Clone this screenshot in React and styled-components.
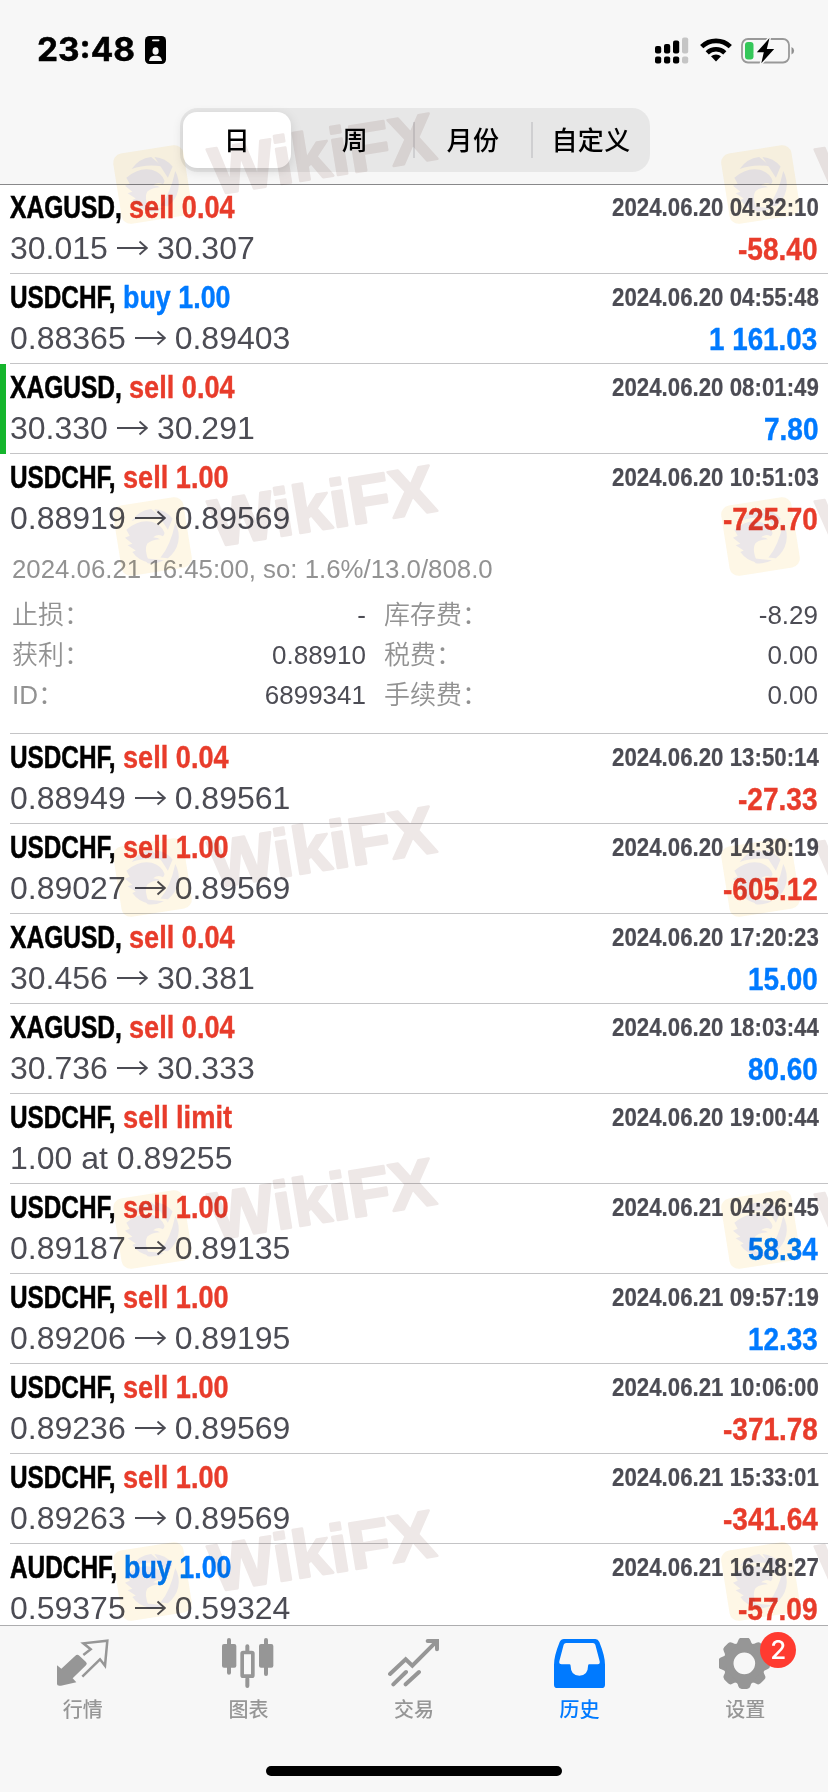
import { useLayoutEffect, useRef, useState } from 'react';
import styled, { createGlobalStyle } from 'styled-components';

const GlobalStyle = createGlobalStyle`
    * {
        box-sizing: border-box;
    }

    body {
        margin: 0;
        background: #ffffff;
        font-family: "Liberation Sans", "Noto Sans CJK SC", sans-serif;
    }
`;

const colors = {
    red: '#e83c2b',
    blue: '#007aff',
    text: '#4c4c54',
    muted: '#929292',
    bar: '#f7f7f7',
};

const Screen = styled.div`
    position: relative;
    display: flex;
    flex-direction: column;
    width: 828px;
    height: 1792px;
    overflow: hidden;
    background: #ffffff;
`;

const Header = styled.header`
    flex: none;
    display: flex;
    flex-direction: column;
    align-items: center;
    height: 185px;
    background: ${colors.bar};
    border-bottom: 1px solid #88888a;
`;

const StatusBar = styled.div`
    display: flex;
    justify-content: space-between;
    align-items: center;
    width: 100%;
    height: 108px;
    padding: 0 33px 8px 37px;
`;

const StatusGroup = styled.div`
    display: flex;
    align-items: center;
    gap: ${({ $gap }) => $gap}px;
`;

const Clock = styled.span`
    font: 700 32px/40px Inter, "Liberation Sans", sans-serif;
    color: #000000;
`;

const Segments = styled.div`
    display: grid;
    grid-template-columns: 113px 118px 118px 118px;
    width: 470px;
    height: 64px;
    margin-left: 2px;
    padding: 4px 0 4px 3px;
    border-radius: 18px;
    background: #e7e7e7;
`;

const Segment = styled.button`
    display: flex;
    align-items: center;
    justify-content: center;
    border: 0;
    margin-right: ${({ $active }) => ($active ? 5 : 0)}px;
    padding: 0 0 3px;
    position: relative;
    border-radius: 14px;
    background: ${({ $active }) => ($active ? '#ffffff' : 'transparent')};
    box-shadow: ${({ $active }) => ($active ? '0 3px 12px rgba(0, 0, 0, 0.12)' : 'none')};
    font: 500 26px/34px "Noto Sans CJK SC", sans-serif;
    letter-spacing: 0.4px;
    color: #000000;

    &::before {
        content: "";
        display: ${({ $divider }) => ($divider ? 'block' : 'none')};
        position: absolute;
        left: -1px;
        top: 10px;
        width: 2px;
        height: 36px;
        background: #cfcfd1;
    }
`;

const List = styled.main`
    flex: none;
    height: 1441px;
    margin-top: -1px;
    overflow: hidden;
`;

const Item = styled.article`
    padding-left: 10px;
    box-shadow: ${({ $marked }) => ($marked ? 'inset 6px 0 0 #15b52c' : 'none')};
`;

const ItemBody = styled.div`
    border-bottom: 1px solid #c4c4c6;
`;

const ItemMain = styled.div`
    display: flex;
    justify-content: space-between;
    height: ${({ $open }) => ($open ? 90 : 89)}px;
    padding: 3px 10px 0 0;
    line-height: 40px;
    white-space: nowrap;
`;

const Column = styled.div`
    display: flex;
    flex-direction: column;
    align-items: ${({ $end }) => ($end ? 'flex-end' : 'flex-start')};
`;

const Title = styled.div`
    display: flex;
    height: 40px;
    font-size: 32px;
    font-weight: 700;
    color: #000000;
`;

const Action = styled.span`
    color: ${({ $buy }) => ($buy ? colors.blue : colors.red)};
`;

const Price = styled.div`
    display: flex;
    align-items: center;
    gap: 9px;
    height: 40px;
    padding-top: 1px;
    font-size: 32px;
    color: ${colors.text};
`;

const DateTime = styled.div`
    height: 40px;
    font-size: 26px;
    font-weight: 700;
    color: ${colors.text};
`;

const Profit = styled.div`
    height: 42px;
    padding-top: 2px;
    font-size: 32px;
    font-weight: 700;
    color: ${({ $minus }) => ($minus ? colors.red : colors.blue)};
`;

const Details = styled.div`
    height: 189px;
    padding: 9px 10px 0 2px;
    color: ${colors.muted};
`;

const Comment = styled.div`
    height: 42px;
    font-size: 25px;
    line-height: 32px;
`;

const DetailsGrid = styled.dl`
    display: grid;
    grid-template-columns: 354px 1fr;
    column-gap: 18px;
    grid-auto-rows: 40px;
    margin: 0;
`;

const Field = styled.div`
    display: flex;
    justify-content: space-between;
    font-size: 26px;
    line-height: 40px;

    dt {
        font-weight: 350;
    }

    dd {
        margin: 0;
        color: ${colors.text};
    }
`;

const TabBar = styled.nav`
    flex: 1;
    display: grid;
    grid-template-columns: repeat(5, 1fr);
    align-content: start;
    background: ${colors.bar};
    border-top: 1px solid #adadaf;
`;

const Tab = styled.a`
    display: flex;
    flex-direction: column;
    align-items: center;
    padding-top: 12px;
    color: ${({ $active }) => ($active ? colors.blue : '#969696')};
    font: 500 20px/28px "Noto Sans CJK SC", sans-serif;
`;

const TabIcon = styled.span`
    position: relative;
    height: 57px;

    svg {
        display: block;
        width: 52px;
        height: 52px;
    }
`;

const Badge = styled.span`
    position: absolute;
    top: -6px;
    left: 41px;
    width: 36px;
    height: 36px;
    border-radius: 50%;
    background: #ff3b30;
    color: #ffffff;
    text-align: center;
    font: 500 26px/36px Inter, sans-serif;
`;

const HomeIndicator = styled.div`
    grid-column: 1 / -1;
    justify-self: center;
    width: 296px;
    height: 10px;
    margin-top: 43px;
    border-radius: 5px;
    background: #000000;
`;

const Watermarks = styled.div`
    position: absolute;
    inset: 0;
    overflow: hidden;
    pointer-events: none;
    mix-blend-mode: multiply;

    svg {
        position: absolute;
        overflow: visible;
        opacity: 0.135;
    }
`;

const FitBox = styled.span`
    display: inline-block;
    white-space: pre;
`;

const FitInner = styled.span`
    display: inline-block;
    transform-origin: 0 50%;
    -webkit-text-stroke: ${({ $stroke }) => $stroke || 0}px currentColor;
`;

// Squeezes the text horizontally so that it takes exactly `width` pixels
const Fit = ({ width, stroke, children }) => {
    const ref = useRef(null);
    const [scale, setScale] = useState(1);

    useLayoutEffect(() => {
        setScale(width / ref.current.offsetWidth);
    }, [width]);

    return (
        <FitBox style={{ width }}>
            <FitInner ref={ref} $stroke={stroke} style={{ transform: `scaleX(${scale})` }}>{children}</FitInner>
        </FitBox>
    )
}

const symbolWidth = { XAGUSD: 119, USDCHF: 112.5, AUDCHF: 113.5 };
const actionWidth = { 'sell 0.04': 106, 'sell 1.00': 106, 'buy 1.00': 107.5, 'sell limit': 109 };

// condensed bold digits: narrow punctuation, wide numerals
const amountWidth = (value) => [...value].reduce((sum, c) => {
    if (c === '.' || c === ' ') return sum + 7.8;
    if (c === '-') return sum + 10;
    return sum + 15.5;
}, 0);

const orders = [
    { symbol: 'XAGUSD', action: 'sell 0.04', open: '30.015', close: '30.307', date: '2024.06.20 04:32:10', profit: '-58.40' },
    { symbol: 'USDCHF', action: 'buy 1.00', open: '0.88365', close: '0.89403', date: '2024.06.20 04:55:48', profit: '1 161.03' },
    { symbol: 'XAGUSD', action: 'sell 0.04', open: '30.330', close: '30.291', date: '2024.06.20 08:01:49', profit: '7.80', marked: true },
    {
        symbol: 'USDCHF', action: 'sell 1.00', open: '0.88919', close: '0.89569', date: '2024.06.20 10:51:03', profit: '-725.70',
        comment: '2024.06.21 16:45:00, so: 1.6%/13.0/808.0',
        fields: [
            ['止损：', '-'], ['库存费：', '-8.29'],
            ['获利：', '0.88910'], ['税费：', '0.00'],
            ['ID：', '6899341'], ['手续费：', '0.00'],
        ],
    },
    { symbol: 'USDCHF', action: 'sell 0.04', open: '0.88949', close: '0.89561', date: '2024.06.20 13:50:14', profit: '-27.33' },
    { symbol: 'USDCHF', action: 'sell 1.00', open: '0.89027', close: '0.89569', date: '2024.06.20 14:30:19', profit: '-605.12' },
    { symbol: 'XAGUSD', action: 'sell 0.04', open: '30.456', close: '30.381', date: '2024.06.20 17:20:23', profit: '15.00' },
    { symbol: 'XAGUSD', action: 'sell 0.04', open: '30.736', close: '30.333', date: '2024.06.20 18:03:44', profit: '80.60' },
    { symbol: 'USDCHF', action: 'sell limit', open: '1.00 at 0.89255', date: '2024.06.20 19:00:44' },
    { symbol: 'USDCHF', action: 'sell 1.00', open: '0.89187', close: '0.89135', date: '2024.06.21 04:26:45', profit: '58.34' },
    { symbol: 'USDCHF', action: 'sell 1.00', open: '0.89206', close: '0.89195', date: '2024.06.21 09:57:19', profit: '12.33' },
    { symbol: 'USDCHF', action: 'sell 1.00', open: '0.89236', close: '0.89569', date: '2024.06.21 10:06:00', profit: '-371.78' },
    { symbol: 'USDCHF', action: 'sell 1.00', open: '0.89263', close: '0.89569', date: '2024.06.21 15:33:01', profit: '-341.64' },
    { symbol: 'AUDCHF', action: 'buy 1.00', open: '0.59375', close: '0.59324', date: '2024.06.21 16:48:27', profit: '-57.09' },
];

const Arrow = () => (
    <svg width="31" height="16" viewBox="0 0 31 16" fill="none" stroke="currentColor" strokeWidth="1.8">
        <path d="M0 8h29.5M22.5 1.5 29.8 8l-7.3 6.5" />
    </svg>
)

const Order = ({ order }) => {
    const { symbol, action, open, close, date, profit, marked, comment, fields } = order;

    return (
        <Item $marked={marked}>
            <ItemBody>
                <ItemMain $open={fields}>
                    <Column>
                        <Title>
                            <Fit width={symbolWidth[symbol]} stroke={0.6}>{symbol + ', '}</Fit>
                            <Action $buy={action.startsWith('buy')}>
                                <Fit width={actionWidth[action]} stroke={0.4}>{action}</Fit>
                            </Action>
                        </Title>
                        <Price>
                            <span>{open}</span>
                            {close && <Arrow />}
                            {close && <span>{close}</span>}
                        </Price>
                    </Column>
                    <Column $end>
                        <DateTime><Fit width={206.5} stroke={0.2}>{date}</Fit></DateTime>
                        {profit && (
                            <Profit $minus={profit.startsWith('-')}>
                                <Fit width={amountWidth(profit)} stroke={0.4}>{profit}</Fit>
                            </Profit>
                        )}
                    </Column>
                </ItemMain>
                {fields && (
                    <Details>
                        <Comment><Fit width={481}>{comment}</Fit></Comment>
                        <DetailsGrid>
                            {fields.map(([label, value]) => (
                                <Field key={label}><dt>{label}</dt><dd>{value}</dd></Field>
                            ))}
                        </DetailsGrid>
                    </Details>
                )}
            </ItemBody>
        </Item>
    )
}

const IdCard = () => (
    <svg width="21" height="28" viewBox="0 0 21 28">
        <rect width="21" height="28" rx="4.5" fill="#000" />
        <rect x="7" y="3.4" width="7.5" height="1.8" rx=".9" fill="#f7f7f7" />
        <ellipse cx="10.6" cy="15" rx="3.1" ry="3.8" fill="#f7f7f7" />
        <path d="M4 25q.5-4.6 5-5.2h3.2q4.3.6 4.8 5.2Z" fill="#f7f7f7" />
    </svg>
)

const Signal = () => (
    <svg width="36" height="27" viewBox="0 0 36 27">
        {[[0, 9], [9, 7], [18, 3.5], [27, 0.5]].map(([x, y]) => (
            <g key={x} fill={x === 27 ? '#c5c5c5' : '#000'}>
                <rect x={x} y={y} width="6.2" height={16.5 - y} rx="2" />
                <rect x={x} y="19.5" width="6.2" height="7" rx="2" />
            </g>
        ))}
    </svg>
)

const Wifi = () => (
    <svg width="32" height="24" viewBox="0 0 32 24" fill="none" stroke="#000" strokeWidth="4.6">
        <path d="M1.7 8.7a20.5 20.5 0 0 1 28.6 0" />
        <path d="M7.2 14.8a12.8 12.8 0 0 1 17.6 0" />
        <path d="M16 23.5l-5-5.2a7.5 7.5 0 0 1 10 0Z" fill="#000" stroke="none" />
    </svg>
)

const Battery = () => (
    <svg width="54" height="27" viewBox="0 0 54 27">
        <rect x="1" y="2" width="47" height="23.5" rx="6" fill="none" stroke="#999" strokeWidth="1.8" />
        <path d="M50.5 10q2.6 1 2.6 3.8t-2.6 3.8Z" fill="#8f8f8f" />
        <rect x="4" y="5" width="8.5" height="17.5" rx="3" fill="#34c759" />
        <path d="M28.500 1 15.800 15.200h7l-2.500 11L33.200 12h-7.400Z" fill="#000" stroke="#f7f7f7" strokeWidth="3" paintOrder="stroke" />
    </svg>
)

const QuotesIcon = () => (
    <svg viewBox="0 0 156 156">
        <path d="M55 53q6-6 12 0l20 19q5 5 0 10l-40 39 11 12-46 10q-12 2-12-5V82l13 10Z" fill="currentColor" />
        <path d="m79 51 22-17-22-18 72-8-7 75-15-19-53 52" fill="none" stroke="currentColor" strokeWidth="7.5" />
    </svg>
)

const ChartIcon = () => (
    <svg viewBox="0 0 156 156" stroke="currentColor" strokeLinecap="round" fill="currentColor">
        <path d="M21 6v98M132 6v102M76 25v14M76 122v22" strokeWidth="12" />
        <rect x="0" y="18" width="43" height="71" rx="6" stroke="none" />
        <rect x="111" y="18" width="43" height="71" rx="6" stroke="none" />
        <rect x="60.5" y="43.5" width="32" height="71" rx="3" fill="none" strokeWidth="11" />
    </svg>
)

const TradeIcon = () => (
    <svg viewBox="0 0 156 156" fill="none" stroke="currentColor" strokeWidth="12" strokeLinecap="round">
        <path d="m6 108 47-44 20 19 72-72M16 139l38-37M53 139l40-37" />
        <path d="M119 9h28v25" />
    </svg>
)

const HistoryIcon = () => (
    <svg viewBox="0 0 156 156" fill="currentColor" fillRule="evenodd">
        <path d="M30 3h94q8 0 12 9 17 42 17 68v60q0 10-10 10H10q-10 0-10-10V80q0-26 17-68 4-9 13-9ZM36 15q-5 0-7 5L16 70q-2 9 7 9h24q3 0 3 6 0 28 26 28t26-28q0-6 3-6h26q8 0 6-9L124 20q-2-5-7-5Z" />
    </svg>
)

const SettingsIcon = () => (
    <svg viewBox="0 0 156 156">
        <g transform="translate(76 76)" fill="currentColor">
            <circle r="47" fill="none" stroke="currentColor" strokeWidth="29" />
            {[0, 45, 90, 135, 180, 225, 270, 315].map((angle) => (
                <path key={angle} transform={`rotate(${angle})`} d="M-28-54Q-20-60-18-69-16-77-8-77H8Q16-77 18-69 20-60 28-54Z" />
            ))}
        </g>
    </svg>
)

const tabs = [
    { name: '行情', Icon: QuotesIcon },
    { name: '图表', Icon: ChartIcon },
    { name: '交易', Icon: TradeIcon },
    { name: '历史', Icon: HistoryIcon, active: true },
    { name: '设置', Icon: SettingsIcon, badge: 2 },
];

const Watermark = ({ x, y }) => (
    <svg width="330" height="90" style={{ left: x, top: y }}>
        <rect x="5" y="5" width="71" height="71" rx="9" fill="#f2c344" transform="rotate(-9 40.5 40.5)" />
        <g transform="translate(13 13) scale(.335)" fill="#6a4a5a">
            <path d="M20 36A81 81 0 0 1 78 0l34 28Q60 20 20 36Z" />
            <path d="M88 0a81 81 0 0 1 54 28l-14 34Z" />
            <path d="M150 42a81 81 0 0 1-22 105l-22-2q30-36 44-103Z" />
            <path d="M116 153a81 81 0 0 1-48 9L52 146Z" />
            <path d="M4 62q36-32 76-24 32 10 38 34-2 12-8 8-12-6-26 4 16 2 20 6-28 2-38 14-10 18 6 54-30-2-50-30l10-4L8 108l14-4L0 86l14-6Z" />
        </g>
        <text
            x="0" y="0" transform="translate(102 51) rotate(-9.2)" textLength="227" lengthAdjust="spacingAndGlyphs"
            fontFamily="Liberation Sans" fontWeight="700" fontSize="67"
            fill="#80524b" stroke="#80524b" strokeWidth="2.5" strokeLinejoin="round"
        >WikiFX</text>
    </svg>
)

const App = () => (
    <Screen>
        <GlobalStyle />
        <Header>
            <StatusBar>
                <StatusGroup $gap={10}>
                    <Clock><Fit width={98} stroke={0.5}>23:48</Fit></Clock>
                    <IdCard />
                </StatusGroup>
                <StatusGroup $gap={9}>
                    <Signal />
                    <Wifi />
                    <Battery />
                </StatusGroup>
            </StatusBar>
            <Segments>
                <Segment $active>日</Segment>
                <Segment>周</Segment>
                <Segment $divider>月份</Segment>
                <Segment $divider>自定义</Segment>
            </Segments>
        </Header>
        <List>
            {orders.map((order) => <Order key={order.date} order={order} />)}
        </List>
        <TabBar>
            {tabs.map(({ name, Icon, active, badge }) => (
                <Tab key={name} $active={active}>
                    <TabIcon>
                        <Icon />
                        {badge && <Badge>{badge}</Badge>}
                    </TabIcon>
                    {name}
                </Tab>
            ))}
            <HomeIndicator />
        </TabBar>
        <Watermarks>
            {[144, 496, 837, 1189, 1541].map((y) => [112, 720].map((x) => <Watermark key={`${x}-${y}`} x={x} y={y} />))}
        </Watermarks>
    </Screen>
)

export default App;
